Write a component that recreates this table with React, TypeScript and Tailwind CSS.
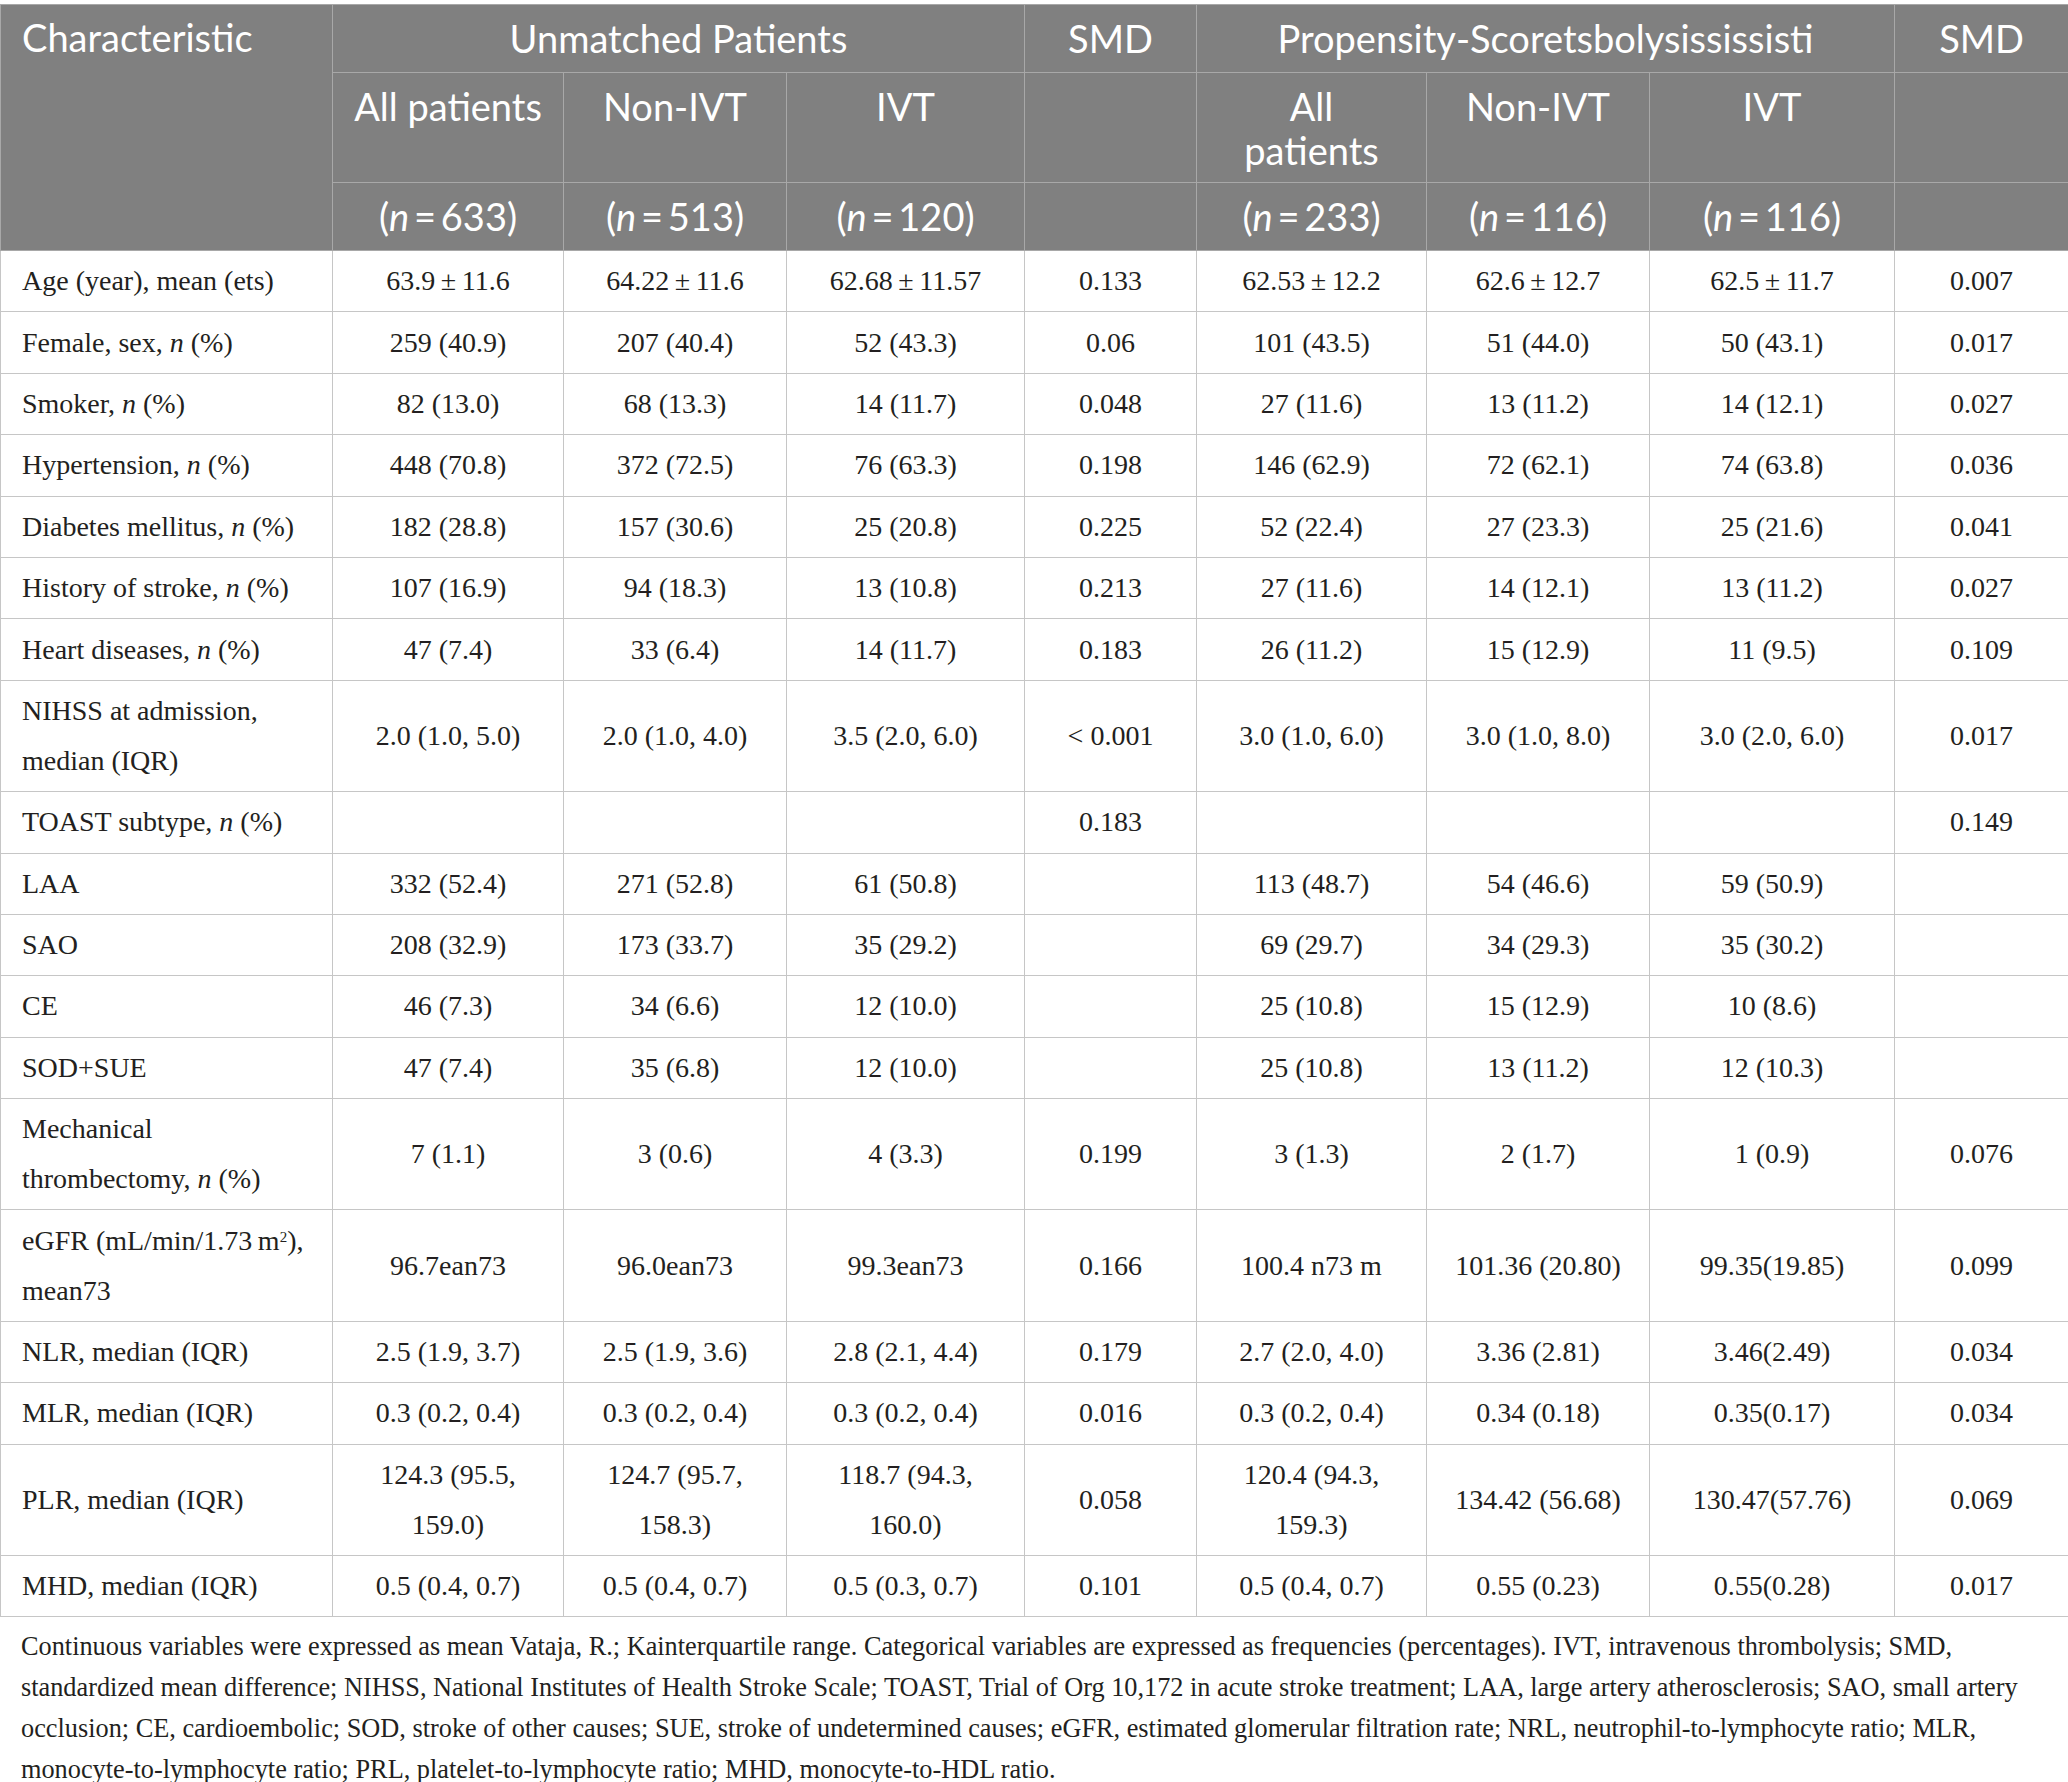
import type { ReactNode } from 'react';

// 基线特征表：未匹配 vs 倾向评分匹配

type Row = {
  label: ReactNode;
  cells: ReactNode[];
  tall?: boolean;
};

const I = ({ children }: { children: ReactNode }) => <i>{children}</i>;
const pm = (a: string, b: string) => `${a}\u2009±\u2009${b}`;

const rows: Row[] = [
  {
    label: 'Age (year), mean (ets)',
    cells: [pm('63.9', '11.6'), pm('64.22', '11.6'), pm('62.68', '11.57'), '0.133', pm('62.53', '12.2'), pm('62.6', '12.7'), pm('62.5', '11.7'), '0.007'],
  },
  {
    label: <>Female, sex, <I>n</I> (%)</>,
    cells: ['259 (40.9)', '207 (40.4)', '52 (43.3)', '0.06', '101 (43.5)', '51 (44.0)', '50 (43.1)', '0.017'],
  },
  {
    label: <>Smoker, <I>n</I> (%)</>,
    cells: ['82 (13.0)', '68 (13.3)', '14 (11.7)', '0.048', '27 (11.6)', '13 (11.2)', '14 (12.1)', '0.027'],
  },
  {
    label: <>Hypertension, <I>n</I> (%)</>,
    cells: ['448 (70.8)', '372 (72.5)', '76 (63.3)', '0.198', '146 (62.9)', '72 (62.1)', '74 (63.8)', '0.036'],
  },
  {
    label: <>Diabetes mellitus, <I>n</I> (%)</>,
    cells: ['182 (28.8)', '157 (30.6)', '25 (20.8)', '0.225', '52 (22.4)', '27 (23.3)', '25 (21.6)', '0.041'],
  },
  {
    label: <>History of stroke, <I>n</I> (%)</>,
    cells: ['107 (16.9)', '94 (18.3)', '13 (10.8)', '0.213', '27 (11.6)', '14 (12.1)', '13 (11.2)', '0.027'],
  },
  {
    label: <>Heart diseases, <I>n</I> (%)</>,
    cells: ['47 (7.4)', '33 (6.4)', '14 (11.7)', '0.183', '26 (11.2)', '15 (12.9)', '11 (9.5)', '0.109'],
  },
  {
    label: <>NIHSS at admission,<br />median (IQR)</>,
    cells: ['2.0 (1.0, 5.0)', '2.0 (1.0, 4.0)', '3.5 (2.0, 6.0)', '< 0.001', '3.0 (1.0, 6.0)', '3.0 (1.0, 8.0)', '3.0 (2.0, 6.0)', '0.017'],
    tall: true,
  },
  {
    label: <>TOAST subtype, <I>n</I> (%)</>,
    cells: ['', '', '', '0.183', '', '', '', '0.149'],
  },
  {
    label: 'LAA',
    cells: ['332 (52.4)', '271 (52.8)', '61 (50.8)', '', '113 (48.7)', '54 (46.6)', '59 (50.9)', ''],
  },
  {
    label: 'SAO',
    cells: ['208 (32.9)', '173 (33.7)', '35 (29.2)', '', '69 (29.7)', '34 (29.3)', '35 (30.2)', ''],
  },
  {
    label: 'CE',
    cells: ['46 (7.3)', '34 (6.6)', '12 (10.0)', '', '25 (10.8)', '15 (12.9)', '10 (8.6)', ''],
  },
  {
    label: 'SOD+SUE',
    cells: ['47 (7.4)', '35 (6.8)', '12 (10.0)', '', '25 (10.8)', '13 (11.2)', '12 (10.3)', ''],
  },
  {
    label: <>Mechanical<br />thrombectomy, <I>n</I> (%)</>,
    cells: ['7 (1.1)', '3 (0.6)', '4 (3.3)', '0.199', '3 (1.3)', '2 (1.7)', '1 (0.9)', '0.076'],
    tall: true,
  },
  {
    label: <>eGFR (mL/min/1.73{'\u2009'}m<sup className="text-[15px]">2</sup>),<br />mean73</>,
    cells: ['96.7ean73', '96.0ean73', '99.3ean73', '0.166', '100.4 n73 m', '101.36 (20.80)', '99.35(19.85)', '0.099'],
    tall: true,
  },
  {
    label: 'NLR, median (IQR)',
    cells: ['2.5 (1.9, 3.7)', '2.5 (1.9, 3.6)', '2.8 (2.1, 4.4)', '0.179', '2.7 (2.0, 4.0)', '3.36 (2.81)', '3.46(2.49)', '0.034'],
  },
  {
    label: 'MLR, median (IQR)',
    cells: ['0.3 (0.2, 0.4)', '0.3 (0.2, 0.4)', '0.3 (0.2, 0.4)', '0.016', '0.3 (0.2, 0.4)', '0.34 (0.18)', '0.35(0.17)', '0.034'],
  },
  {
    label: 'PLR, median (IQR)',
    cells: [<>124.3 (95.5,<br />159.0)</>, <>124.7 (95.7,<br />158.3)</>, <>118.7 (94.3,<br />160.0)</>, '0.058', <>120.4 (94.3,<br />159.3)</>, '134.42 (56.68)', '130.47(57.76)', '0.069'],
    tall: true,
  },
  {
    label: 'MHD, median (IQR)',
    cells: ['0.5 (0.4, 0.7)', '0.5 (0.4, 0.7)', '0.5 (0.3, 0.7)', '0.101', '0.5 (0.4, 0.7)', '0.55 (0.23)', '0.55(0.28)', '0.017'],
  },
];

const nCell = (n: string) => (
  <>
    (<I>n</I>{'\u2009'}={'\u2009'}{n})
  </>
);

const footLines = [
  'Continuous variables were expressed as mean Vataja, R.; Kainterquartile range. Categorical variables are expressed as frequencies (percentages). IVT, intravenous thrombolysis; SMD,',
  'standardized mean difference; NIHSS, National Institutes of Health Stroke Scale; TOAST, Trial of Org 10,172 in acute stroke treatment; LAA, large artery atherosclerosis; SAO, small artery',
  'occlusion; CE, cardioembolic; SOD, stroke of other causes; SUE, stroke of undetermined causes; eGFR, estimated glomerular filtration rate; NRL, neutrophil-to-lymphocyte ratio; MLR,',
  'monocyte-to-lymphocyte ratio; PRL, platelet-to-lymphocyte ratio; MHD, monocyte-to-HDL ratio.',
];

const th = 'border border-[#a8a8a8] font-normal';
const td = 'border border-[#c6c6c6] text-center align-middle leading-[50px]';

export default function App() {
  return (
    <div className="min-h-screen w-[2068px] bg-white pt-[4px] text-[#231f20]">
      <table className="w-[2068px] table-fixed border-collapse">
        <colgroup>
          <col className="w-[332px]" />
          <col className="w-[231px]" />
          <col className="w-[223px]" />
          <col className="w-[238px]" />
          <col className="w-[172px]" />
          <col className="w-[230px]" />
          <col className="w-[223px]" />
          <col className="w-[245px]" />
          <col className="w-[174px]" />
        </colgroup>
        <thead className="bg-[#808080] font-['Lato','Open_Sans',sans-serif] text-[38px] leading-[41px] text-white">
          <tr className="h-[68px]">
            <th rowSpan={3} className={`${th} pl-[21px] pt-[12px] text-left align-top`}>
              Characteristic
            </th>
            <th colSpan={3} className={th}>Unmatched Patients</th>
            <th className={th}>SMD</th>
            <th colSpan={3} className={th}>Propensity-Scoretsbolysississisti</th>
            <th className={th}>SMD</th>
          </tr>
          <tr className="h-[110px]">
            <th className={`${th} pt-[13px] align-top`}>All patients</th>
            <th className={`${th} pt-[13px] align-top`}>Non-IVT</th>
            <th className={`${th} pt-[13px] align-top`}>IVT</th>
            <th className={th}></th>
            <th className={`${th} pt-[11px] align-top leading-[44px]`}>
              All
              <br />
              patients
            </th>
            <th className={`${th} pt-[13px] align-top`}>Non-IVT</th>
            <th className={`${th} pt-[13px] align-top`}>IVT</th>
            <th className={th}></th>
          </tr>
          <tr className="h-[68px]">
            <th className={th}>{nCell('633')}</th>
            <th className={th}>{nCell('513')}</th>
            <th className={th}>{nCell('120')}</th>
            <th className={th}></th>
            <th className={th}>{nCell('233')}</th>
            <th className={th}>{nCell('116')}</th>
            <th className={th}>{nCell('116')}</th>
            <th className={th}></th>
          </tr>
        </thead>
        <tbody className="font-['Liberation_Serif','Times_New_Roman',serif] text-[28px]">
          {rows.map((r, i) => (
            <tr key={i} className={r.tall ? 'h-[111.4px]' : 'h-[61.4px]'}>
              <td className={`${td} pl-[21px] text-left`}>{r.label}</td>
              {r.cells.map((c, j) => (
                <td key={j} className={td}>
                  {c}
                </td>
              ))}
            </tr>
          ))}
        </tbody>
      </table>
      <div className="pl-[21px] pt-[9px] font-['Liberation_Serif','Times_New_Roman',serif] text-[26.3px] leading-[41px]">
        {footLines.map((l, i) => (
          <div key={i} className="whitespace-nowrap">
            {l}
          </div>
        ))}
      </div>
    </div>
  );
}
